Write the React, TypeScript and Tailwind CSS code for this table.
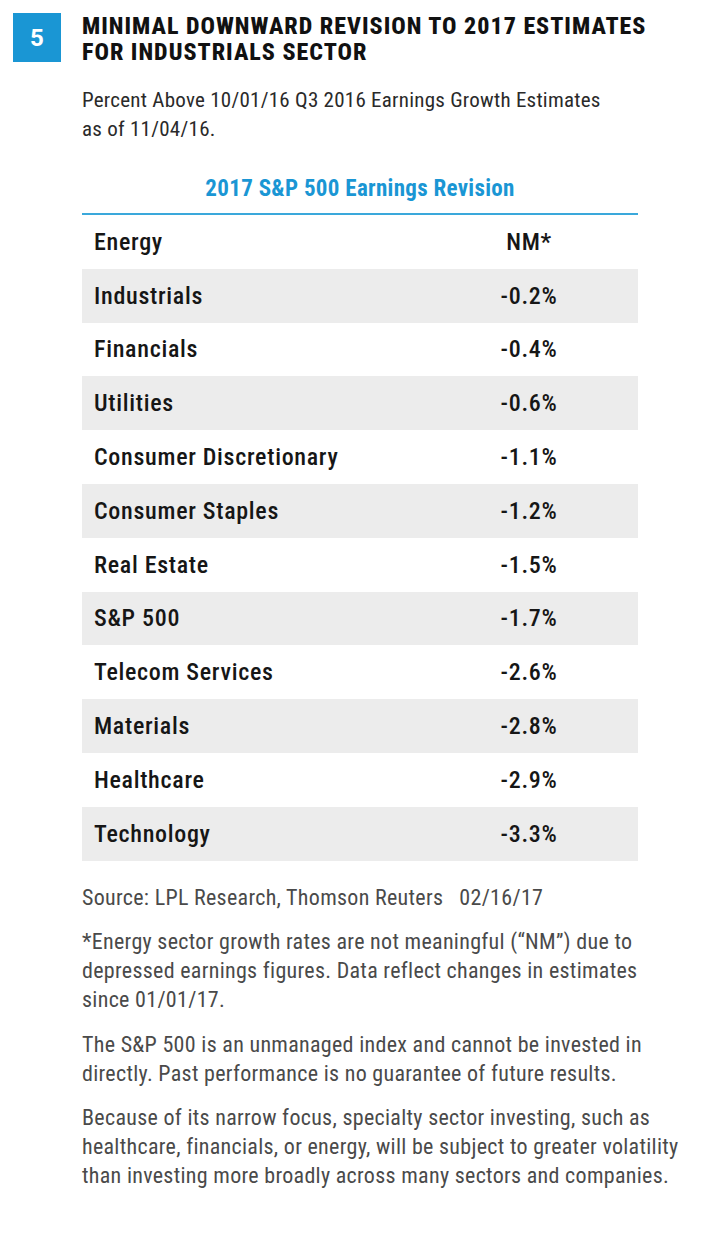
import React from "react";

const rows: [string, string][] = [
  ["Energy", "NM*"],
  ["Industrials", "-0.2%"],
  ["Financials", "-0.4%"],
  ["Utilities", "-0.6%"],
  ["Consumer Discretionary", "-1.1%"],
  ["Consumer Staples", "-1.2%"],
  ["Real Estate", "-1.5%"],
  ["S&P 500", "-1.7%"],
  ["Telecom Services", "-2.6%"],
  ["Materials", "-2.8%"],
  ["Healthcare", "-2.9%"],
  ["Technology", "-3.3%"],
];

function Lines({ lines }: { lines: string[] }) {
  return (
    <>
      {lines.map((l) => (
        <div key={l} className="whitespace-nowrap">
          {l}
        </div>
      ))}
    </>
  );
}

export default function App() {
  return (
    <div className="w-[728px] min-h-[1241px] bg-white font-['Roboto',sans-serif] [font-stretch:75%]">
      <div className="flex pt-[13px] pl-[13px]">
        <div className="w-[48px] h-[49px] bg-[#1a96d4] flex items-center justify-center text-white font-bold text-[24px] leading-none [font-stretch:90%]">
          5
        </div>
        <div className="ml-[21px] text-[#111] font-extrabold text-[24px] leading-[26px] tracking-[1px]">
          <Lines lines={["MINIMAL DOWNWARD REVISION TO 2017 ESTIMATES", "FOR INDUSTRIALS SECTOR"]} />
        </div>
      </div>

      <div className="pl-[82px] mt-[21px] text-[#2a2a2a] text-[21px] leading-[29px] tracking-[0.25px]">
        <Lines lines={["Percent Above 10/01/16 Q3 2016 Earnings Growth Estimates", "as of 11/04/16."]} />
      </div>

      <div className="ml-[82px] w-[556px] mt-[32px]">
        <div className="text-center text-[#1a96d4] font-bold text-[23px] leading-[26px] tracking-[0.3px] pb-[11px] border-b-2 border-[#3aa8db]">
          2017 S&amp;P 500 Earnings Revision
        </div>
        <div>
          {rows.map(([name, val], i) => (
            <div
              key={name}
              className={`flex items-center h-[53.8px] text-[24px] font-[480] text-[#161616] tracking-[0.7px] ${
                i % 2 === 1 ? "bg-[#ececec]" : "bg-white"
              }`}
            >
              <div className="pl-[12px] flex-1 whitespace-nowrap">{name}</div>
              <div className="w-[120px] mr-[49px] text-center">{val}</div>
            </div>
          ))}
        </div>
      </div>

      <div className="pl-[82px] text-[#4a4a4a] text-[22px] leading-[29px] mt-[22px] tracking-[0.3px]">
        <div className="whitespace-nowrap">Source: LPL Research, Thomson Reuters&nbsp;&nbsp;&nbsp;02/16/17</div>
        <div className="mt-[15px]">
          <Lines
            lines={[
              "*Energy sector growth rates are not meaningful (“NM”) due to",
              "depressed earnings figures. Data reflect changes in estimates",
              "since 01/01/17.",
            ]}
          />
        </div>
        <div className="mt-[16px]">
          <Lines
            lines={[
              "The S&P 500 is an unmanaged index and cannot be invested in",
              "directly. Past performance is no guarantee of future results.",
            ]}
          />
        </div>
        <div className="mt-[15px]">
          <Lines
            lines={[
              "Because of its narrow focus, specialty sector investing, such as",
              "healthcare, financials, or energy, will be subject to greater volatility",
              "than investing more broadly across many sectors and companies.",
            ]}
          />
        </div>
      </div>
    </div>
  );
}
